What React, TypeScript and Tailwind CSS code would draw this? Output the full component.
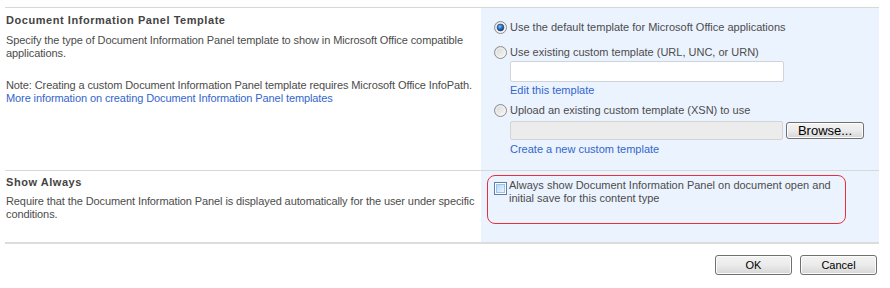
import React from 'react';

function Radio({ checked = false }: { checked?: boolean }) {
  return (
    <svg width="13" height="13" viewBox="0 0 13 13" className="shrink-0">
      <defs>
        <linearGradient id="radioFill" x1="0" y1="0" x2="1" y2="1">
          <stop offset="0" stopColor="#d4d4d4" />
          <stop offset="1" stopColor="#fbfbfb" />
        </linearGradient>
        <radialGradient id="radioDot" cx="0.4" cy="0.35" r="0.7">
          <stop offset="0" stopColor="#8fc1f5" />
          <stop offset="0.5" stopColor="#2b6fc6" />
          <stop offset="1" stopColor="#10347a" />
        </radialGradient>
      </defs>
      <circle cx="6.5" cy="6.5" r="6" fill="url(#radioFill)" stroke="#8d8d8d" strokeWidth="1" />
      <circle cx="6.5" cy="6.5" r="4.5" fill="none" stroke="#f4f4f4" strokeWidth="0.8" />
      {checked && <circle cx="6.5" cy="6.5" r="3.4" fill="url(#radioDot)" stroke="#1d3c6e" strokeWidth="0.6" />}
    </svg>
  );
}

function Checkbox() {
  return (
    <span className="w-[13px] h-[13px] shrink-0 border border-[#5a7fab] bg-white p-[1px] flex">
      <span className="flex-1 bg-gradient-to-br from-[#b7d8f5] to-[#eaf4fd] border border-[#9cc3e8]" />
    </span>
  );
}

function WinButton({ label, className = '' }: { label: string; className?: string }) {
  return (
    <button
      type="button"
      className={`border border-[#707070] rounded-[3px] bg-gradient-to-b from-[#f3f3f3] via-[#ebebeb] to-[#d6d6d6] text-black flex items-center justify-center shadow-[inset_0_0_0_1px_#fcfcfc] ${className}`}
    >
      {label}
    </button>
  );
}

export default function App() {
  return (
    <div className="w-[890px] h-[288px] bg-white text-[11px] leading-[13px] text-[#4c4c4c] font-['Liberation_Sans',Arial,sans-serif] pt-[7px] pl-[5px] pr-[11px]">
      {/* Document Information Panel Template */}
      <div className="flex h-[163px] border-t border-[#d8d8d8]">
        <div className="w-[476px] pt-[6px] pl-[1px] tracking-[-0.1px]">
          <div className="font-bold text-[#444] tracking-[0.55px]">Document Information Panel Template</div>
          <div className="mt-[7px] whitespace-nowrap">
            Specify the type of Document Information Panel template to show in Microsoft Office compatible
            <br />
            applications.
          </div>
          <div className="mt-[19px] whitespace-nowrap">
            Note: Creating a custom Document Information Panel template requires Microsoft Office InfoPath.
          </div>
          <a href="#" className="text-[#3366cc] whitespace-nowrap">
            More information on creating Document Information Panel templates
          </a>
        </div>
        <div className="flex-1 bg-[#ebf3ff] pl-[13px] pt-[11px]">
          <label className="flex items-center gap-[3px] h-[16px]">
            <Radio checked />
            <span>Use the default template for Microsoft Office applications</span>
          </label>
          <label className="flex items-center gap-[3px] h-[16px] mt-[9px]">
            <Radio />
            <span>Use existing custom template (URL, UNC, or URN)</span>
          </label>
          <div className="ml-[16px] mt-[1px] w-[274px] h-[21px] bg-white border border-[#cfd4da] rounded-[2px]" />
          <a href="#" className="block ml-[16px] mt-[2px] text-[#3366cc]">
            Edit this template
          </a>
          <label className="flex items-center gap-[3px] h-[16px] mt-[5px]">
            <Radio />
            <span>Upload an existing custom template (XSN) to use</span>
          </label>
          <div className="ml-[16px] mt-[3px] flex items-center gap-[3px]">
            <div className="w-[273px] h-[19px] bg-[#ececec] border border-[#d4d4d4] rounded-[2px]" />
            <WinButton label="Browse..." className="w-[78px] h-[17px] text-[13px] leading-none font-['Liberation_Sans',Arial,sans-serif]" />
          </div>
          <a href="#" className="block ml-[16px] mt-[3px] text-[#3366cc]">
            Create a new custom template
          </a>
        </div>
      </div>

      {/* Show Always */}
      <div className="flex h-[72px] border-t border-[#d8d8d8]">
        <div className="w-[476px] pt-[5px] pl-[1px] tracking-[-0.1px]">
          <div className="font-bold text-[#444] tracking-[0.55px]">Show Always</div>
          <div className="mt-[6px] whitespace-nowrap">
            Require that the Document Information Panel is displayed automatically for the user under specific
            <br />
            conditions.
          </div>
        </div>
        <div className="flex-1 bg-[#ebf3ff] pl-[6px] pt-[4px]">
          <div className="w-[359px] h-[49px] border border-[#e8303a] rounded-[8px] pl-[6px] pt-[2px] flex gap-[2px]">
            <div className="pt-[4px]">
              <Checkbox />
            </div>
            <span className="whitespace-nowrap pt-[1px]">
              Always show Document Information Panel on document open and
              <br />
              initial save for this content type
            </span>
          </div>
        </div>
      </div>

      {/* Footer */}
      <div className="border-t-2 border-[#dcdcdc]" />
      <div className="flex justify-end gap-[8px] mt-[11px] pr-[2px]">
        <WinButton label="OK" className="w-[77px] h-[20px] text-[11px]" />
        <WinButton label="Cancel" className="w-[77px] h-[20px] text-[11px]" />
      </div>
    </div>
  );
}
